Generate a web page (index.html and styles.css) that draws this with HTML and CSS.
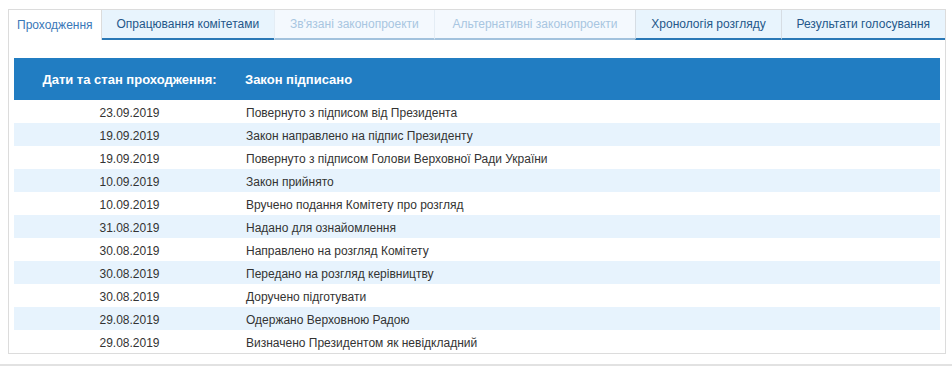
FILE: index.html
```html
<!DOCTYPE html>
<html lang="uk">
<head>
<meta charset="utf-8">
<title>Хронологія</title>
<link rel="stylesheet" href="styles.css">
</head>
<body>
<div class="page">
  <div class="box">
    <div class="tabs">
      <div class="tab tab-active">Проходження</div>
      <div class="tab tab-on tab-first-on">Опрацювання комітетами</div>
      <div class="tab tab-off">Зв'язані законопроекти</div>
      <div class="tab tab-off tab-wide">Альтернативні законопроекти</div>
      <div class="tab tab-on">Хронологія розгляду</div>
      <div class="tab tab-on">Результати голосування</div>
    </div>
    <div class="panel">
      <div class="head">
        <div class="c-date">Дати та стан проходження:</div>
        <div class="c-text">Закон підписано</div>
      </div>
      <div class="row"><div class="c-date">23.09.2019</div><div class="c-text">Повернуто з підписом від Президента</div></div>
      <div class="row alt"><div class="c-date">19.09.2019</div><div class="c-text">Закон направлено на підпис Президенту</div></div>
      <div class="row"><div class="c-date">19.09.2019</div><div class="c-text">Повернуто з підписом Голови Верховної Ради України</div></div>
      <div class="row alt"><div class="c-date">10.09.2019</div><div class="c-text">Закон прийнято</div></div>
      <div class="row"><div class="c-date">10.09.2019</div><div class="c-text">Вручено подання Комітету про розгляд</div></div>
      <div class="row alt"><div class="c-date">31.08.2019</div><div class="c-text">Надано для ознайомлення</div></div>
      <div class="row"><div class="c-date">30.08.2019</div><div class="c-text">Направлено на розгляд Комітету</div></div>
      <div class="row alt"><div class="c-date">30.08.2019</div><div class="c-text">Передано на розгляд керівництву</div></div>
      <div class="row"><div class="c-date">30.08.2019</div><div class="c-text">Доручено підготувати</div></div>
      <div class="row alt"><div class="c-date">29.08.2019</div><div class="c-text">Одержано Верховною Радою</div></div>
      <div class="row"><div class="c-date">29.08.2019</div><div class="c-text">Визначено Президентом як невідкладний</div></div>
    </div>
  </div>
  <div class="rule"></div>
</div>
</body>
</html>
```
FILE: styles.css
```css
html, body {
  margin: 0;
  padding: 0;
  background: #ffffff;
}

body {
  font-family: "Liberation Sans", Arial, sans-serif;
  font-size: 12px;
  color: #333333;
}

.page {
  padding-top: 9px;
}

.box {
  margin: 0 6px 0 8px;
  border: 1px solid #dcdcdc;
}

.tabs {
  display: flex;
  height: 30px;
}

.tab {
  display: flex;
  align-items: center;
  justify-content: center;
  box-sizing: border-box;
  height: 30px;
  padding: 0 14px 0 14px;
  font-size: 12px;
  white-space: nowrap;
  flex: 1 1 auto;
  border-left: 1px solid #d6dde4;
}

.tab-wide {
  padding: 0 17px 0 17px;
}

.tab-active {
  flex: 0 0 auto;
  padding: 0 8px 0 8px;
  background: #ffffff;
  color: #3a78b8;
  border-left: none;
  border-right: 1px solid #dcdcdc;
}

.tab-on {
  background: #e8f4fd;
  color: #24578a;
  border-bottom: 2px solid #2a78b6;
}

.tab-first-on {
  border-left: none;
}

.tab-off {
  background: #f4f9fe;
  color: #a8c6e1;
  border-bottom: 2px solid #a2c2dd;
  border-left-color: #e4edf5;
}

.panel {
  padding: 18px 5px 0 5px;
}

.head {
  display: flex;
  align-items: center;
  height: 42px;
  background: #217dc2;
  color: #ffffff;
  font-weight: bold;
  font-size: 13px;
}

.row {
  display: flex;
  align-items: center;
  box-sizing: border-box;
  height: 23px;
  padding-top: 3px;
  background: #ffffff;
}

.row.alt {
  background: #e7f3fd;
}

.c-date {
  width: 231px;
  flex: 0 0 231px;
  text-align: center;
}

.c-text {
  flex: 1 1 auto;
  padding-left: 1px;
}

.head .c-text {
  padding-left: 0;
}

.rule {
  margin-top: 10px;
  height: 2px;
  background: #e2e2e2;
}
```
